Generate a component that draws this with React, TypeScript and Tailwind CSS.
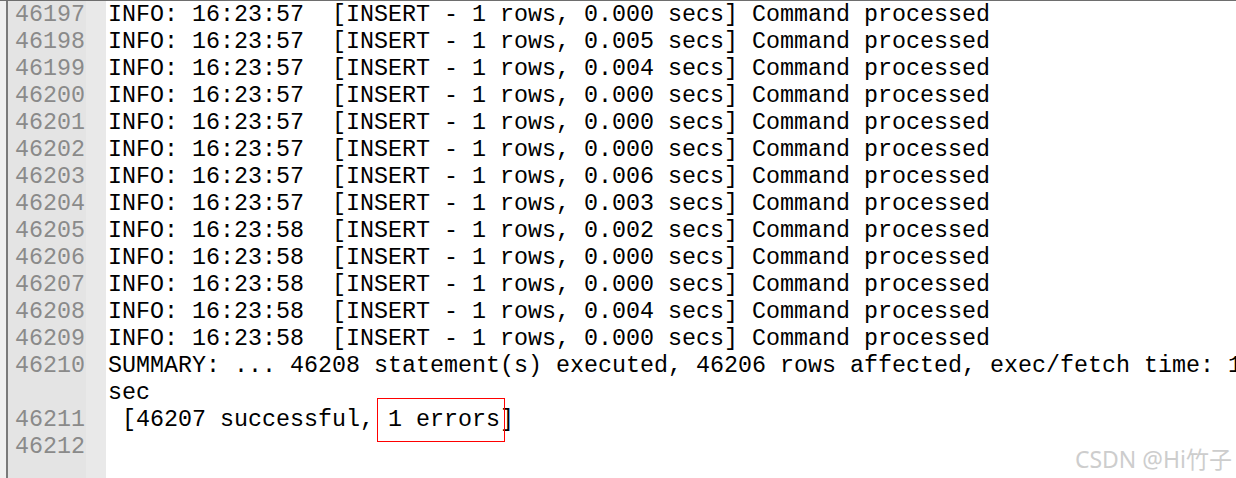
import React from 'react';

const rows: [number, string, string][] = [
  [46197, '57', '0.000'],
  [46198, '57', '0.005'],
  [46199, '57', '0.004'],
  [46200, '57', '0.000'],
  [46201, '57', '0.000'],
  [46202, '57', '0.000'],
  [46203, '57', '0.006'],
  [46204, '57', '0.003'],
  [46205, '58', '0.002'],
  [46206, '58', '0.000'],
  [46207, '58', '0.000'],
  [46208, '58', '0.004'],
  [46209, '58', '0.000'],
];

const mono = { fontFamily: '"Liberation Mono", "Courier New", monospace' };

export default function App() {
  const gutter: string[] = [...rows.map((r) => String(r[0])), '46210', '', '46211', '46212'];

  return (
    <div
      className="relative flex h-[478px] w-[1236px] overflow-hidden border-t border-[#6e6e6e] bg-white text-[23.33px] leading-[27px]"
      style={mono}
    >
      {/* left edge */}
      <div className="w-[6px] shrink-0 bg-[#f0f0f0]" />
      <div className="w-[2px] shrink-0 bg-[#7a7a7a]" />

      {/* line numbers */}
      <div className="w-[78px] shrink-0 bg-[#e4e4e4] pr-[1px] pt-[1px] text-right text-[#8a8a8a]">
        {gutter.map((n, i) => (
          <div key={i} className="h-[27px] whitespace-pre">{n}</div>
        ))}
      </div>

      {/* fold margin */}
      <div className="w-[20px] shrink-0 bg-[#e9e9e9]" />

      {/* text */}
      <div className="relative min-w-0 flex-1 pl-[2px] pt-[1px] text-black">
        {rows.map(([n, s, t]) => (
          <div key={n} className="h-[27px] whitespace-pre">
            {`INFO: 16:23:${s}  [INSERT - 1 rows, ${t} secs] Command processed`}
          </div>
        ))}
        <div className="h-[27px] overflow-hidden whitespace-pre">
          SUMMARY: ... 46208 statement(s) executed, 46206 rows affected, exec/fetch time: 1
        </div>
        <div className="h-[27px] whitespace-pre">sec</div>
        <div className="h-[27px] whitespace-pre"> [46207 successful, 1 errors]</div>
        <div className="h-[27px]" />

        {/* annotation box */}
        <div className="absolute left-[271px] top-[397px] h-[44px] w-[128px] border border-[#ff0000]" />
      </div>

      {/* watermark */}
      <div
        className="absolute bottom-[5px] right-[4px] text-[23px] leading-[28px] text-[#cdcdcd]"
        style={{ fontFamily: '"Noto Sans", "Noto Sans CJK SC", sans-serif' }}
      >
        CSDN @Hi竹子
      </div>
    </div>
  );
}
